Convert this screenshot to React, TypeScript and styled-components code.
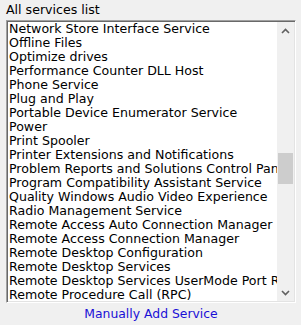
import React from "react";
import styled, { createGlobalStyle } from "styled-components";

const Global = createGlobalStyle`
  html, body { margin: 0; padding: 0; background: #f0f0f0; }
  body { font-family: "DejaVu Sans", Verdana, sans-serif; }
`;

const Page = styled.div`
  width: 301px;
  height: 325px;
  box-sizing: border-box;
  padding: 3px 5px 0 6px;
  display: flex;
  flex-direction: column;
  background: #f0f0f0;
`;

const Label = styled.div`
  font-size: 12.6px;
  line-height: 14px;
  height: 17px;
  color: #000;
`;

const ListBox = styled.div`
  height: 283px;
  box-sizing: border-box;
  display: flex;
  border-top: 1px solid #a0a0a0;
  border-left: 1px solid #a0a0a0;
  border-right: 1px solid #ffffff;
  border-bottom: 1px solid #ffffff;
  box-shadow: inset 1px 1px 0 #696969, inset -1px -1px 0 #e3e3e3;
  padding: 1px;
  background: #fff;
`;

const Items = styled.ul`
  flex: 1;
  min-width: 0;
  margin: 0;
  padding: 0 0 0 1px;
  list-style: none;
  overflow: hidden;
  background: #fff;
`;

const Item = styled.li`
  font-size: 12.6px;
  line-height: 14px;
  height: 14px;
  white-space: nowrap;
  overflow: hidden;
  color: #000;
`;

const ScrollBar = styled.div`
  width: 17px;
  flex: none;
  display: flex;
  flex-direction: column;
  background: #f0f0f0;
`;

const ArrowButton = styled.div`
  height: 17px;
  display: flex;
  align-items: center;
  justify-content: center;
`;

const Track = styled.div`
  flex: 1;
  display: flex;
  flex-direction: column;
`;

const Thumb = styled.div<{ $top: number; $size: number }>`
  margin-top: ${(p) => p.$top}px;
  margin-left: 1px;
  margin-right: 1px;
  height: ${(p) => p.$size}px;
  background: #cdcdcd;
`;

const LinkRow = styled.div`
  display: flex;
  justify-content: center;
  padding-top: 4px;
`;

const Link = styled.a`
  font-size: 12.4px;
  line-height: 14px;
  color: #1a0fd6;
  text-decoration: none;
  cursor: pointer;
`;

const items = [
  "Network Store Interface Service",
  "Offline Files",
  "Optimize drives",
  "Performance Counter DLL Host",
  "Phone Service",
  "Plug and Play",
  "Portable Device Enumerator Service",
  "Power",
  "Print Spooler",
  "Printer Extensions and Notifications",
  "Problem Reports and Solutions Control Panel Support",
  "Program Compatibility Assistant Service",
  "Quality Windows Audio Video Experience",
  "Radio Management Service",
  "Remote Access Auto Connection Manager",
  "Remote Access Connection Manager",
  "Remote Desktop Configuration",
  "Remote Desktop Services",
  "Remote Desktop Services UserMode Port Redirector",
  "Remote Procedure Call (RPC)",
];

const Chevron = ({ up }: { up?: boolean }) => (
  <svg width="9" height="6" viewBox="0 0 9 6">
    <path
      d={up ? "M1 5 L4.5 1.5 L8 5" : "M1 1 L4.5 4.5 L8 1"}
      fill="none"
      stroke="#606060"
      strokeWidth="1.6"
    />
  </svg>
);

export default function App() {
  return (
    <>
      <Global />
      <Page>
        <Label>All services list</Label>
        <ListBox>
          <Items>
            {items.map((t) => (
              <Item key={t}>{t}</Item>
            ))}
          </Items>
          <ScrollBar>
            <ArrowButton>
              <Chevron up />
            </ArrowButton>
            <Track>
              <Thumb $top={114} $size={31} />
            </Track>
            <ArrowButton>
              <Chevron />
            </ArrowButton>
          </ScrollBar>
        </ListBox>
        <LinkRow>
          <Link>Manually Add Service</Link>
        </LinkRow>
      </Page>
    </>
  );
}
